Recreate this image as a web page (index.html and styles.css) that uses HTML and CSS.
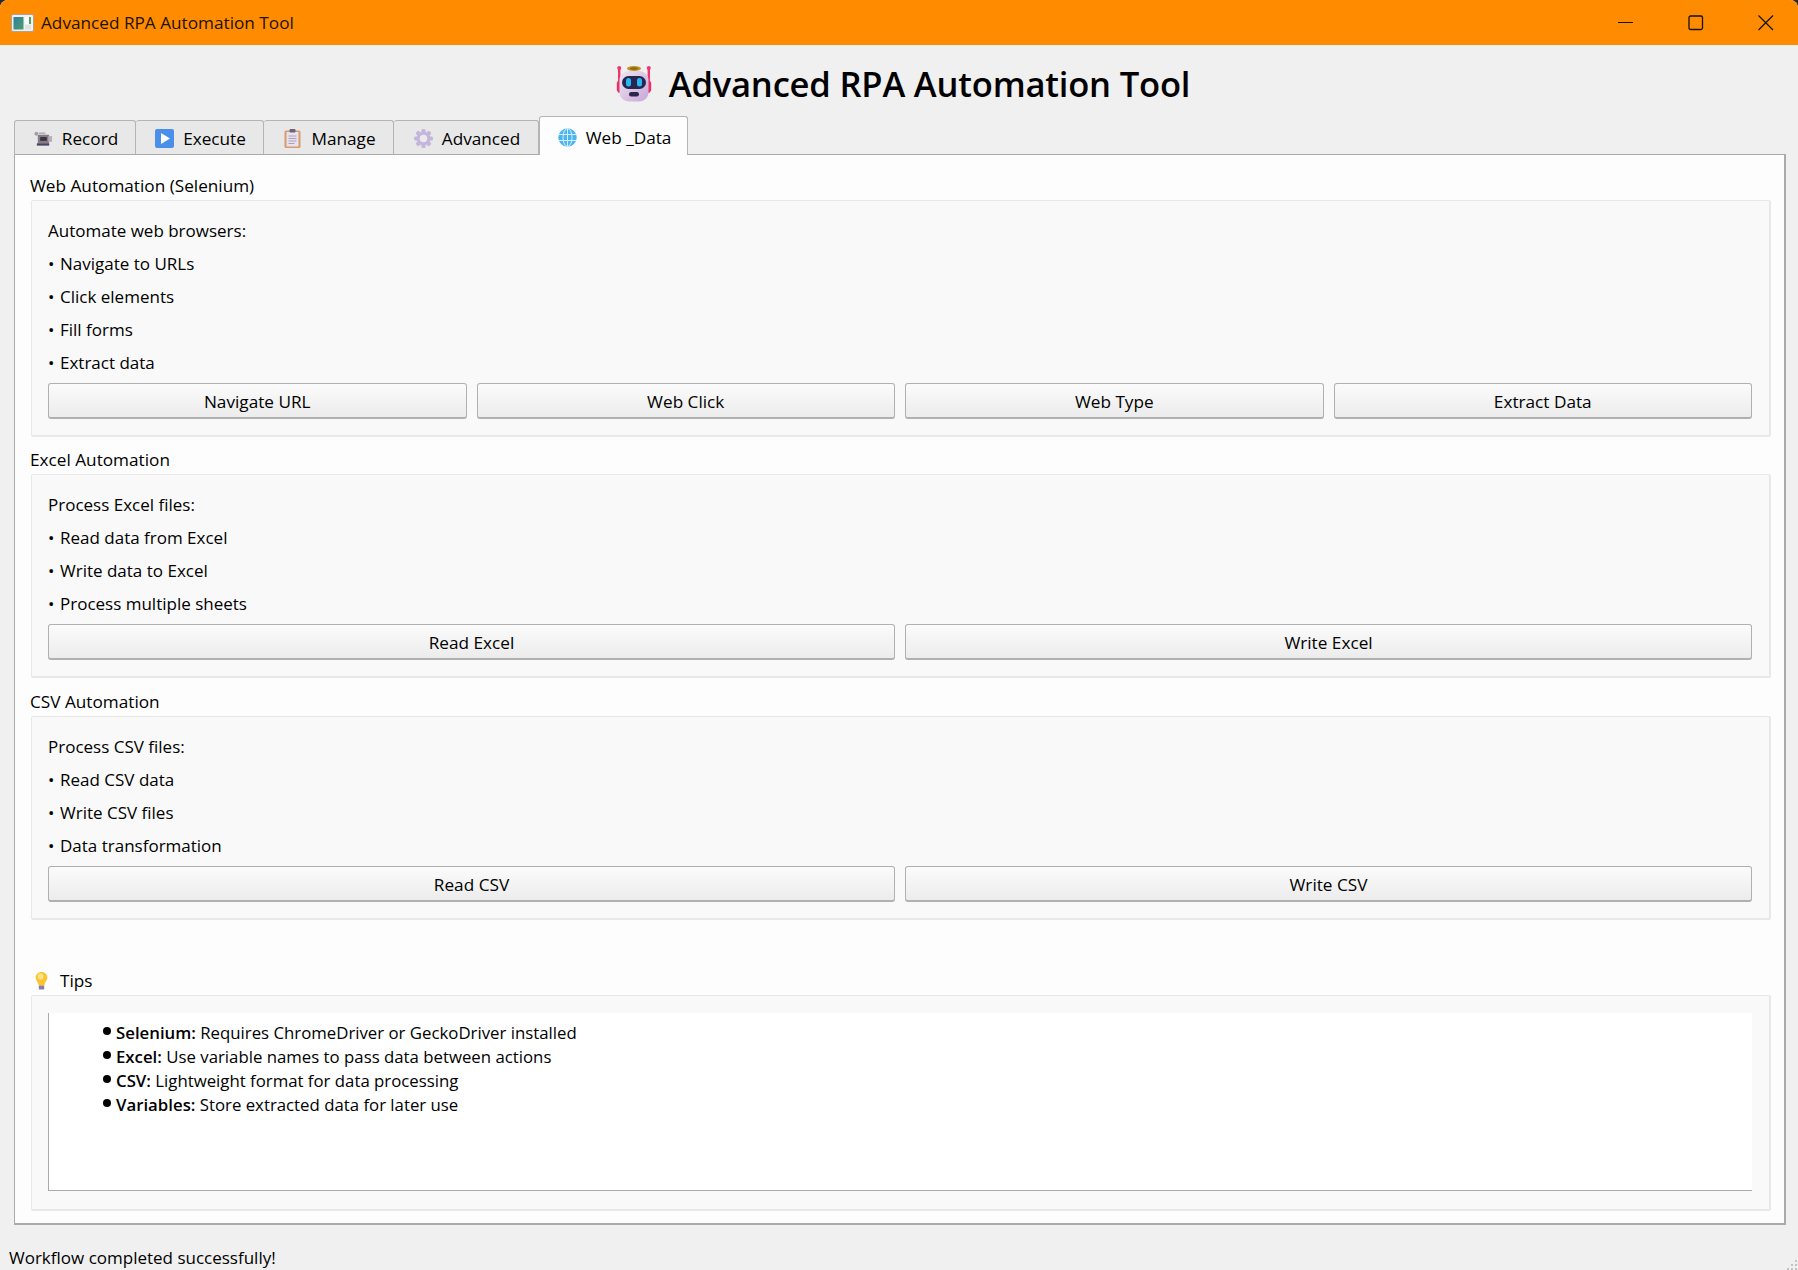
FILE: index.html
```html
<!DOCTYPE html>
<html lang="en">
<head>
<meta charset="utf-8">
<title>Advanced RPA Automation Tool</title>
<link rel="stylesheet" href="styles.css">
</head>
<body>
<div class="window">
  <header class="titlebar">
    <svg class="app-icon" viewBox="0 0 23 18"><defs><linearGradient id="ai" x1="0" y1="0" x2="1" y2="1"><stop offset="0" stop-color="#2f7fa6"/><stop offset="1" stop-color="#4f9d6a"/></linearGradient></defs><rect x=".5" y=".5" width="22" height="17" rx="1.5" fill="#f4f1ea" stroke="#a9a59c"/><rect x="2.500" y="3" width="10" height="12.500" fill="url(#ai)"/><rect x="14" y="3" width="6" height="7" fill="#fff"/><rect x="18" y="3" width="2" height="7" fill="#4f9d6a"/><rect x="14" y="11" width="6" height="4.500" fill="#dfe4e0"/></svg>
    <span class="titlebar-text">Advanced RPA Automation Tool</span>
    <div class="window-controls">
      <svg class="wc" viewBox="0 0 16 16"><path d="M0 7.500H15" stroke="#111" stroke-width="1" fill="none"/></svg>
      <svg class="wc" viewBox="0 0 16 16"><rect x="1" y="1" width="13.500" height="13.500" rx="1.500" stroke="#111" stroke-width="1.300" fill="none"/></svg>
      <svg class="wc" viewBox="0 0 16 16"><path d="M.5.5 15 15M15 .5.5 15" stroke="#111" stroke-width="1.200" fill="none"/></svg>
    </div>
  </header>

  <div class="app-heading">
    <svg class="robot" viewBox="0 0 36 38">
      <defs><linearGradient id="rb" x1="0" y1="0" x2="1" y2="1"><stop offset="0" stop-color="#efe6f2"/><stop offset="1" stop-color="#c7a6d8"/></linearGradient></defs>
      <rect x="2" y="2" width="2.400" height="26" rx="1.200" fill="#f0356d"/>
      <rect x="31.600" y="2" width="2.400" height="26" rx="1.200" fill="#f0356d"/>
      <circle cx="3.200" cy="3" r="2" fill="#f0356d"/><circle cx="32.800" cy="3" r="2" fill="#f0356d"/>
      <rect x="0.800" y="16" width="4" height="11" rx="2" fill="#e8326a"/><rect x="31.200" y="16" width="4" height="11" rx="2" fill="#e8326a"/>
      <ellipse cx="18" cy="3.500" rx="7" ry="2.600" fill="#c0921f"/><ellipse cx="18" cy="3.500" rx="4" ry="1.300" fill="#8a6a18"/>
      <rect x="3.500" y="6" width="29" height="30.500" rx="9" fill="url(#rb)"/>
      <rect x="6" y="11" width="24" height="13" rx="6.500" fill="#27264f"/>
      <rect x="10" y="13" width="5" height="8.500" rx="2.500" fill="#29b6f6"/><rect x="21" y="13" width="5" height="8.500" rx="2.500" fill="#29b6f6"/>
      <rect x="13" y="27" width="10" height="4.500" rx="2.200" fill="#2b2548"/>
    </svg>
    <h1 class="app-title">Advanced RPA Automation Tool</h1>
  </div>

  <nav class="tabs">
    <div class="tab tab-record">
      <svg class="tab-icon" viewBox="0 0 20 18"><rect x="4" y="5" width="12" height="9" rx="1" fill="#857c88"/><rect x="6.500" y="7.500" width="7" height="4" fill="#3a3640"/><circle cx="2.500" cy="4" r="2" fill="#a39da6"/><rect x="15" y="6.500" width="4" height="6" fill="#b5b0b8"/><rect x="3" y="14" width="13" height="2.500" fill="#4d4360"/><rect x="5" y="2.500" width="7" height="2" fill="#b8b3bb"/></svg>
      <span>Record</span>
    </div>
    <div class="tab tab-execute">
      <svg class="tab-icon" viewBox="0 0 19 19"><rect x="0" y="0" width="19" height="19" rx="2" fill="#4a90ea"/><path d="M6 4 15 9.500 6 15Z" fill="#fff"/></svg>
      <span>Execute</span>
    </div>
    <div class="tab tab-manage">
      <svg class="tab-icon" viewBox="0 0 16 19"><rect x="0" y="1.500" width="16" height="17.500" rx="1.500" fill="#d99a6c"/><rect x="2" y="3" width="12" height="14.500" fill="#e8e2f0"/><rect x="5" y="0" width="6" height="3.500" rx="1" fill="#6d6478"/><path d="M4 7H12M4 9.500H12M4 12H12M4 14.500H10" stroke="#a9a0b5" stroke-width="1"/></svg>
      <span>Manage</span>
    </div>
    <div class="tab tab-advanced">
      <svg class="tab-icon" viewBox="0 0 18 18"><g fill="#c4b6da"><circle cx="9" cy="9" r="6.500"/><rect x="7" y="0" width="4" height="18" rx="1.500"/><rect x="7" y="0" width="4" height="18" rx="1.500" transform="rotate(45 9 9)"/><rect x="7" y="0" width="4" height="18" rx="1.500" transform="rotate(90 9 9)"/><rect x="7" y="0" width="4" height="18" rx="1.500" transform="rotate(135 9 9)"/></g><circle cx="9" cy="9" r="3.600" fill="#ebe8ee"/></svg>
      <span>Advanced</span>
    </div>
    <div class="tab tab-web is-active">
      <svg class="tab-icon" viewBox="0 0 19 19"><circle cx="9.500" cy="9.500" r="9.200" fill="#4db5ee"/><g fill="none" stroke="#d4effc" stroke-width="1"><ellipse cx="9.500" cy="9.500" rx="4.500" ry="9"/><path d="M9.500 .5V18.500M.8 6.500H18.200M.8 12.500H18.200"/></g></svg>
      <span>Web _Data</span>
    </div>
  </nav>

  <main class="pane">
    <section class="group">
      <h2 class="group-title">Web Automation (Selenium)</h2>
      <div class="frame">
        <p class="line">Automate web browsers:</p>
        <p class="line"><span class="dot">•</span>Navigate to URLs</p>
        <p class="line"><span class="dot">•</span>Click elements</p>
        <p class="line"><span class="dot">•</span>Fill forms</p>
        <p class="line"><span class="dot">•</span>Extract data</p>
        <div class="buttons">
          <button class="btn">Navigate URL</button>
          <button class="btn">Web Click</button>
          <button class="btn">Web Type</button>
          <button class="btn">Extract Data</button>
        </div>
      </div>
    </section>

    <section class="group group-excel">
      <h2 class="group-title">Excel Automation</h2>
      <div class="frame">
        <p class="line">Process Excel files:</p>
        <p class="line"><span class="dot">•</span>Read data from Excel</p>
        <p class="line"><span class="dot">•</span>Write data to Excel</p>
        <p class="line"><span class="dot">•</span>Process multiple sheets</p>
        <div class="buttons">
          <button class="btn">Read Excel</button>
          <button class="btn">Write Excel</button>
        </div>
      </div>
    </section>

    <section class="group group-csv">
      <h2 class="group-title">CSV Automation</h2>
      <div class="frame">
        <p class="line">Process CSV files:</p>
        <p class="line"><span class="dot">•</span>Read CSV data</p>
        <p class="line"><span class="dot">•</span>Write CSV files</p>
        <p class="line"><span class="dot">•</span>Data transformation</p>
        <div class="buttons">
          <button class="btn">Read CSV</button>
          <button class="btn">Write CSV</button>
        </div>
      </div>
    </section>

    <section class="group group-tips">
      <h2 class="group-title">
        <svg class="bulb" viewBox="0 0 14 20"><path d="M7 0C3 0 .5 3 .5 6.500c0 3 2.500 4.500 3.500 8.500h6c1-4 3.500-5.500 3.500-8.500C13.500 3 11 0 7 0Z" fill="#fbc531"/><ellipse cx="6" cy="5" rx="3" ry="3.500" fill="#ffe28a"/><rect x="4" y="15" width="6" height="4.500" rx="1" fill="#8d7aa8"/></svg>
        Tips
      </h2>
      <div class="frame frame-tips">
        <ul class="tips">
          <li><b>Selenium:</b> Requires ChromeDriver or GeckoDriver installed</li>
          <li><b>Excel:</b> Use variable names to pass data between actions</li>
          <li><b>CSV:</b> Lightweight format for data processing</li>
          <li><b>Variables:</b> Store extracted data for later use</li>
        </ul>
      </div>
    </section>
  </main>

  <footer class="statusbar">
    <span>Workflow completed successfully!</span>
    <svg class="grip" viewBox="0 0 12 12"><g fill="#c4c4c4"><rect x="10" y="2" width="2" height="2"/><rect x="6" y="6" width="2" height="2"/><rect x="10" y="6" width="2" height="2"/><rect x="2" y="10" width="2" height="2"/><rect x="6" y="10" width="2" height="2"/><rect x="10" y="10" width="2" height="2"/></g></svg>
  </footer>
</div>
</body>
</html>
```
FILE: styles.css
```css
* { box-sizing: border-box; }
html, body { margin: 0; padding: 0; }
body {
  width: 1798px;
  height: 1270px;
  overflow: hidden;
  background: #2a2a2a;
  font-family: "Open Sans", "Noto Sans", sans-serif;
  font-size: 17px;
  color: #000;
}
.window {
  width: 1798px;
  height: 1270px;
  display: flex;
  flex-direction: column;
  background: #f0f0f0;
  border-radius: 8px 8px 0 0;
  overflow: hidden;
}
.titlebar {
  height: 45px;
  flex: none;
  display: flex;
  align-items: center;
  background: #ff8c00;
  padding-left: 11px;
}
.app-icon { width: 23px; height: 18px; flex: none; margin-right: 7px; }
.titlebar-text { font-size: 17.2px; color: #1c1206; }
.window-controls {
  margin-left: auto;
  display: flex;
  align-items: center;
  gap: 54px;
  padding-right: 24px;
}
.wc { width: 16px; height: 16px; display: block; }

.app-heading {
  height: 71px;
  flex: none;
  display: flex;
  align-items: center;
  justify-content: center;
  gap: 17px;
  padding: 6px 0 0 8px;
}
.robot { width: 36px; height: 38px; }
.app-title {
  margin: 0;
  font-size: 34.6px;
  font-weight: 600;
  letter-spacing: -.2px;
}

.tabs {
  height: 38px;
  flex: none;
  display: flex;
  align-items: flex-end;
  padding-left: 14px;
  position: relative;
  z-index: 1;
}
.tab {
  height: 35px;
  display: flex;
  align-items: center;
  justify-content: center;
  gap: 9px;
  padding: 2px 0 0 2px;
  background: #e8e8e8;
  border: 1px solid #b4b4b4;
  border-bottom: 1px solid #aaa;
  border-left: 0;
  border-radius: 3px 3px 0 0;
  margin-bottom: -1px;
  font-size: 17.2px;
}
.tab-record { width: 122px; border-left: 1px solid #b4b4b4; }
.tab-execute { width: 128px; }
.tab-manage { width: 130px; }
.tab-advanced { width: 145px; }
.tab-web { width: 149px; }
.tab.is-active {
  height: 39px;
  padding-top: 2px;
  background: #fdfdfd;
  border-left: 1px solid #b4b4b4;
  border-bottom: 0;
}
.tab-icon { width: 19px; height: 19px; flex: none; }

.pane {
  height: 1071px;
  flex: none;
  margin: 0 12px 0 14px;
  padding: 17px 13px 0 16px;
  display: flex;
  flex-direction: column;
  background: #fdfdfd;
  border: 1px solid #aaa;
  border-right-width: 2px;
  border-bottom-width: 2px;
}
.group-excel { margin-top: 9px; }
.group-csv { margin-top: 10px; }
.group-tips { margin-top: 47px; }
.group-title {
  height: 28px;
  margin: 0 0 0 -1px;
  display: flex;
  align-items: center;
  font-size: 17.2px;
  font-weight: 400;
  line-height: 28px;
}
.frame {
  background: #f9f9f9;
  border: 1px solid #e8e8e8;
  border-right-width: 2px;
  border-bottom-width: 2px;
  border-radius: 2px;
  padding: 13px 17px 16px 16px;
}
.line {
  margin: 0;
  height: 33px;
  line-height: 34px;
}
.dot { display: inline-block; width: 12px; }
.buttons {
  margin-top: 4px;
  display: grid;
  grid-auto-flow: column;
  grid-auto-columns: 1fr;
  gap: 10px;
}
.btn {
  height: 36px;
  padding: 1px 0 0;
  font: inherit;
  font-size: 17.2px;
  color: #000;
  background: linear-gradient(#fbfbfb, #ececec);
  border: 1px solid #b0b0b0;
  border-bottom-width: 2px;
  border-radius: 3px;
}

.bulb { width: 13px; height: 18px; margin: 0 12px 0 5px; flex: none; }
.frame-tips { height: 216px; padding: 17px 17px 18px 16px; }
.tips {
  height: 100%;
  margin: 0;
  padding: 7px 0 0 67px;
  list-style: none;
  background: #fff;
  border-left: 1px solid #aaa;
  border-bottom: 1px solid #aaa;
  font-size: 16.800px;
}
.tips li { height: 24px; line-height: 25px; position: relative; }
.tips li::before {
  content: "";
  position: absolute;
  left: -13px;
  top: 7px;
  width: 8px;
  height: 8px;
  border-radius: 50%;
  background: #000;
}
.tips b { font-weight: 600; }

.statusbar {
  flex: 1;
  display: flex;
  align-items: center;
  padding: 20px 0 0 9px;
  position: relative;
}
.grip { width: 12px; height: 12px; position: absolute; right: 1px; bottom: 0; }
```
